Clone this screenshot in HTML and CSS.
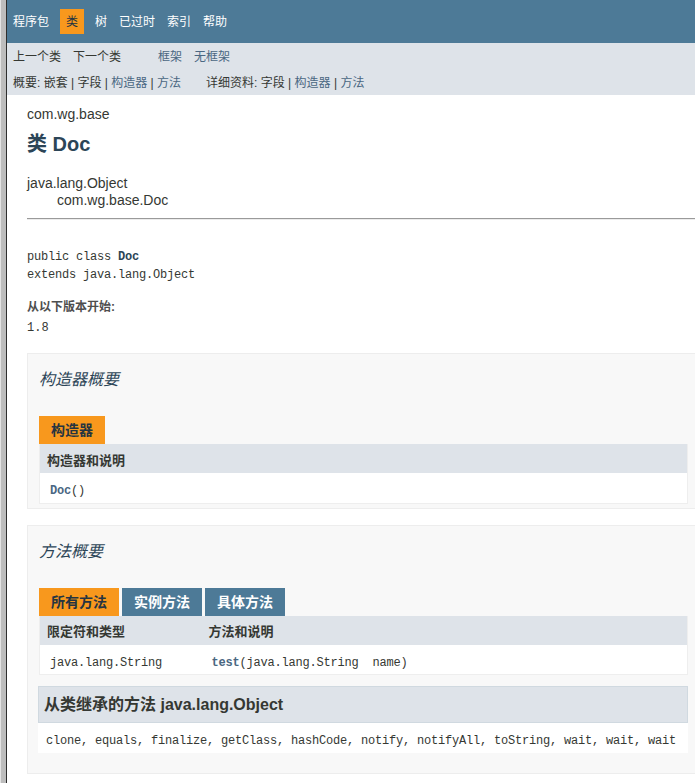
FILE: index.html
```html
<!DOCTYPE html>
<html lang="zh-CN">
<head>
    <meta charset="UTF-8">
    <title>Doc</title>
    <link rel="stylesheet" href="styles.css">
</head>
<body>
<div class="frame-edge"></div>
<div class="page">

    <!-- top navigation -->
    <div class="top-nav">
        <ul class="nav-list">
            <li><a href="#">程序包</a></li>
            <li class="nav-current">类</li>
            <li><a href="#">树</a></li>
            <li><a href="#">已过时</a></li>
            <li><a href="#">索引</a></li>
            <li><a href="#">帮助</a></li>
        </ul>
    </div>

    <div class="sub-nav">
        <div class="sub-row">
            <ul class="nav-list">
                <li>上一个类</li>
                <li>下一个类</li>
            </ul>
            <ul class="nav-list">
                <li><a href="#">框架</a></li>
                <li><a href="#">无框架</a></li>
            </ul>
        </div>
        <div class="sub-row2">
            <ul class="sub-list">
                <li>概要:&nbsp;</li>
                <li>嵌套&nbsp;|&nbsp;</li>
                <li>字段&nbsp;|&nbsp;</li>
                <li><a href="#">构造器</a>&nbsp;|&nbsp;</li>
                <li><a href="#">方法</a></li>
            </ul>
            <ul class="sub-list">
                <li>详细资料:&nbsp;</li>
                <li>字段&nbsp;|&nbsp;</li>
                <li><a href="#">构造器</a>&nbsp;|&nbsp;</li>
                <li><a href="#">方法</a></li>
            </ul>
        </div>
    </div>

    <div class="header">
        <div class="sub-title">com.wg.base</div>
        <h2 class="title">类 Doc</h2>
    </div>

    <div class="content">
        <ul class="inheritance">
            <li>java.lang.Object</li>
            <li class="inherit-child">com.wg.base.Doc</li>
        </ul>

        <hr>
        <pre class="class-sig">public class <span class="type-name">Doc</span>
extends java.lang.Object</pre>
        <dl class="since">
            <dt>从以下版本开始:</dt>
            <dd>1.8</dd>
        </dl>

        <!-- constructor summary -->
        <section class="summary">
            <h3>构造器概要</h3>
            <div class="tabs">
                <span class="tab tab-active">构造器</span>
            </div>
            <table class="member-table">
                <tr>
                    <th>构造器和说明</th>
                </tr>
                <tr>
                    <td><code><a href="#" class="member-link">Doc</a>()</code></td>
                </tr>
            </table>
        </section>

        <!-- method summary -->
        <section class="summary">
            <h3>方法概要</h3>
            <div class="tabs">
                <span class="tab tab-active">所有方法</span>
                <span class="tab">实例方法</span>
                <span class="tab">具体方法</span>
            </div>
            <table class="member-table fixed">
                <colgroup>
                    <col class="col-type">
                    <col>
                </colgroup>
                <tr>
                    <th>限定符和类型</th>
                    <th>方法和说明</th>
                </tr>
                <tr>
                    <td><code>java.lang.String</code></td>
                    <td><code><a href="#" class="member-link">test</a>(java.lang.String&nbsp;&nbsp;name)</code></td>
                </tr>
            </table>

            <div class="inherited">
                <h3 class="inherited-title">从类继承的方法&nbsp;java.lang.Object</h3>
                <div class="inherited-list"><code>clone, equals, finalize, getClass, hashCode, notify, notifyAll, toString, wait, wait, wait</code></div>
            </div>
        </section>
    </div>
</div>
</body>
</html>
```

FILE: styles.css
```css
html, body {
    margin: 0;
    padding: 0;
}

body {
    display: flex;
    min-height: 100vh;
    overflow: hidden;
    background-color: #ffffff;
    color: #353833;
    font-family: "Liberation Sans", Arial, "Noto Sans CJK SC", sans-serif;
    font-size: 14px;
}

a {
    text-decoration: none;
    color: #4A6782;
}

code, pre {
    font-family: "Liberation Mono", "Noto Sans CJK SC", monospace;
    font-size: 12px;
    letter-spacing: -0.2px;
}

.frame-edge {
    flex-shrink: 0;
    width: 5px;
    background-color: #bdbdbd;
    border-left: 1px solid #e4e4e4;
    border-right: 1px solid #2e2e2e;
}

.page {
    flex-shrink: 0;
    width: 722px;
}

/* navigation */
.top-nav {
    height: 43px;
    padding-top: 9px;
    box-sizing: border-box;
    background-color: #4D7A97;
    font-size: 12px;
}

.nav-list {
    display: flex;
    margin: 0 25px 0 0;
    padding: 0;
    list-style: none;
}

.nav-list li {
    padding: 6px 6px 4px;
    line-height: 15px;
}

.top-nav a {
    color: #ffffff;
}

.top-nav .nav-current {
    margin: 0 5px;
    background-color: #F8981D;
    color: #253441;
}

.sub-nav {
    background-color: #dee3e9;
    font-size: 12px;
}

.sub-row {
    display: flex;
}

.sub-row .nav-list li {
    padding: 7px 6px 3px;
}

.sub-row2 {
    display: flex;
    padding: 8px 0 4px 6px;
}

.sub-list {
    display: flex;
    margin: 0 25px 0 0;
    padding: 0;
    list-style: none;
    line-height: 15px;
}

/* header */
.header {
    margin: 0 20px;
    padding-top: 5px;
}

.sub-title {
    margin-top: 6px;
    line-height: 16px;
}

.title {
    margin: 10px 0;
    font-size: 20px;
    line-height: 24px;
    color: #2c4557;
}

.content {
    padding: 9px 20px 10px;
}

.inheritance {
    margin: 0;
    padding: 0;
    list-style: none;
    line-height: 17px;
}

.inherit-child {
    padding-left: 30px;
}

hr {
    height: 0;
    margin: 9px 0 0;
    border: 0;
    border-top: 1px solid #9a9a9a;
    border-bottom: 1px solid #ececec;
}

.class-sig {
    margin: 28px 0 0;
    line-height: 18px;
}

.type-name {
    font-weight: bold;
    color: #2c4557;
}

.since {
    margin: 15px 0 0;
}

.since dt {
    font-size: 12px;
    font-weight: bold;
    line-height: 16px;
    color: #4E4E4E;
}

.since dd {
    margin: 4px 0 0;
    font-family: "Liberation Mono", monospace;
    font-size: 12px;
    line-height: 18px;
}

/* summary blocks */
.summary {
    margin: 16px 0 16px;
    padding: 0 20px 4px 11px;
    border: 1px solid #ededed;
    background-color: #f8f8f8;
}

.summary + .summary {
    margin-top: 0;
    padding-bottom: 20px;
}

.summary h3 {
    margin: 15px 0 25px;
    font-size: 16px;
    font-style: italic;
    font-weight: normal;
    line-height: 22px;
    color: #2c4557;
}

.tabs {
    display: flex;
    gap: 3px;
}

.tab {
    padding: 0 12px;
    height: 28px;
    line-height: 28px;
    font-size: 14px;
    font-weight: bold;
    background-color: #4D7A97;
    color: #ffffff;
}

.tab-active {
    background-color: #F8981D;
    color: #253441;
}

.member-table {
    width: 100%;
    border-collapse: collapse;
    border-left: 1px solid #eeeeee;
    border-right: 1px solid #eeeeee;
    border-bottom: 1px solid #eeeeee;
    font-size: 13px;
}

.member-table.fixed {
    table-layout: fixed;
}

.col-type {
    width: 162px;
}

.member-table th {
    height: 29px;
    padding: 7px 3px 4px 7px;
    box-sizing: border-box;
    background-color: #dee3e9;
    text-align: left;
    line-height: 17px;
    white-space: nowrap;
}

.member-table td {
    height: 30px;
    padding: 9px 3px 3px 10px;
    box-sizing: border-box;
    background-color: #ffffff;
    line-height: 16px;
    white-space: nowrap;
}

.member-link {
    font-weight: bold;
}

.inherited {
    margin: 11px 0 0 -1px;
}

.summary .inherited-title {
    margin: 0;
    padding: 7px 5px;
    border: 1px solid #d0d9e0;
    background-color: #dee3e9;
    font-size: 16px;
    font-style: normal;
    font-weight: bold;
    line-height: 21px;
    color: #353833;
}

.inherited-list {
    height: 30px;
    padding: 8px 0 0 8px;
    box-sizing: border-box;
    background-color: #ffffff;
    line-height: 16px;
    white-space: nowrap;
}
```
